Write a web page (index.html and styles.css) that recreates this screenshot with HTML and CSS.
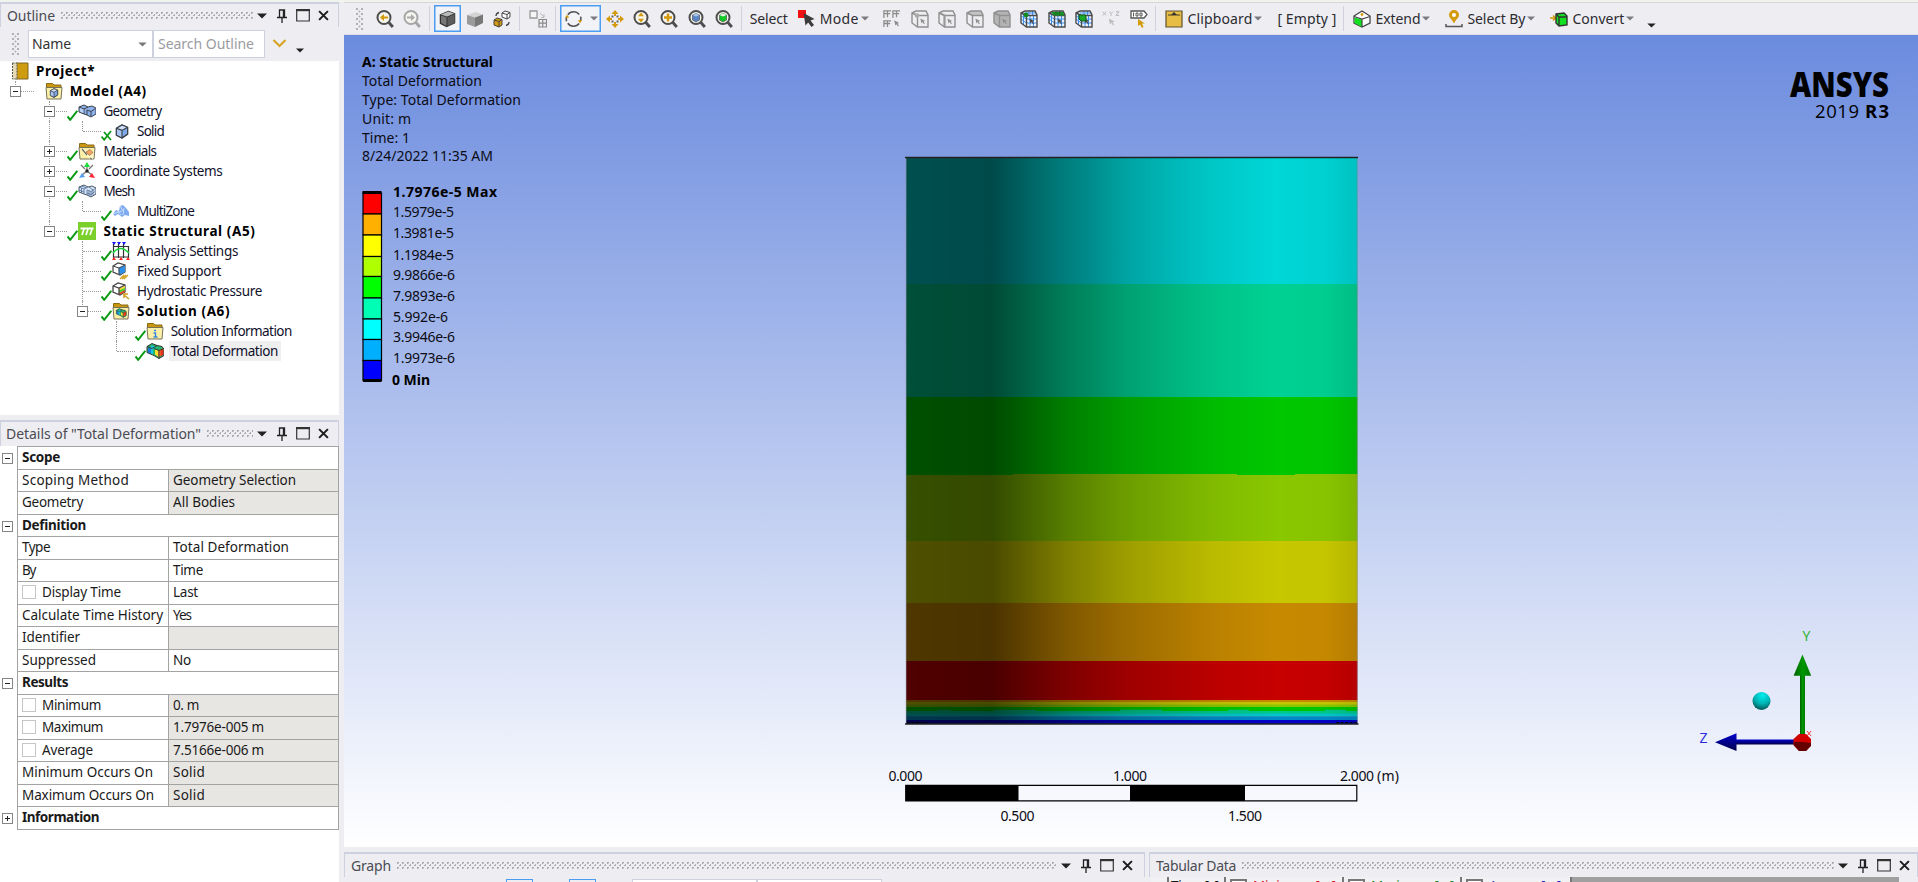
FILE: index.html
```html
<!DOCTYPE html>
<html lang="en">
<head>
<meta charset="utf-8">
<title>Mechanical - Static Structural</title>
<link rel="stylesheet" href="styles.css">
</head>
<body>
<svg class="sprite" aria-hidden="true">
  <defs>
    <symbol id="caret" viewBox="0 0 10 6"><path d="M0 .5h10L5 5.5z" fill="currentColor"/></symbol>
    <symbol id="pin" viewBox="0 0 10 14"><path d="M2.500 8V1h5v7M0 8.500h10M5 9v5" fill="none" stroke="#222" stroke-width="1.300"/><path d="M5.800 1h2v7h-2z" fill="#222"/></symbol>
    <symbol id="max" viewBox="0 0 14 13"><path d="M.7 1h12.600v11H.7z" fill="none" stroke="#333" stroke-width="1.200"/><path d="M0 0h14v2.200H0z" fill="#333"/></symbol>
    <symbol id="close" viewBox="0 0 12 12"><path d="M1.200 1.200l9.600 9.600M10.800 1.200l-9.600 9.600" stroke="#1c1c1c" stroke-width="2.200"/></symbol>
    <symbol id="check" viewBox="0 0 11 11"><path d="M.5 6.500l2.700 3.300L10.300.8" fill="none" stroke="#0a9a14" stroke-width="2"/></symbol>
    <symbol id="hidden" viewBox="0 0 11 11"><path d="M.5 6.500l2.700 3.300L10 1M3 2l7 8" fill="none" stroke="#0a9a14" stroke-width="1.800"/></symbol>
    <symbol id="folder" viewBox="0 0 18 18"><path d="M1.500 6V1.500h6l1.500 1.500h7V6z" fill="#c8960f" stroke="#8a6a14"/><path d="M1 5.500h16l-1 11.500H2z" fill="#fbf0a8" stroke="#77705a"/></symbol>
    <symbol id="cube" viewBox="0 0 14 16"><path d="M1 4.500L7 1l6 2.500v7.500l-6 4-6-3z" fill="#7fa8e8" stroke="#3c4148" stroke-width="1.200"/><path d="M1 4.500L7 1l6 2.500-6 3z" fill="#cfe0fa"/><path d="M1 4.500v7.500l6 3V7z" fill="#a9c6f3"/><path d="M1 4.500l6 2.300 6-3.300M7 7v8M1 4.500V12l6 3 6-4V3.500L7 1z" fill="none" stroke="#3c4148" stroke-width="1.200"/></symbol>
    <symbol id="book" viewBox="0 0 18 18"><path d="M5 1h12v16H5z" fill="#cf9c10" stroke="#7c6420"/><path d="M1.500 1H6v16H1.500z" fill="#e4d9b4" stroke="#555" stroke-dasharray="2 1"/></symbol>
    <symbol id="model" viewBox="0 0 18 18"><use href="#folder"/><use href="#cube" x="4.500" y="6" width="9" height="10"/></symbol>
    <symbol id="geometry" viewBox="0 0 18 18"><path d="M1 5l5-2 4 2 4-1 4 2v6l-5 3-4-2-3-1-5-2z" fill="#8cb2ee" stroke="#3c4148"/><path d="M1 5l5 2 4-2M6 7v5M9 8l4 1.500L17.500 6.500M13 9.500v5M9 8v5" fill="none" stroke="#3c4148"/><path d="M2 6l3.500 1.500v3.500L2 9.500z" fill="#b9d1f6"/></symbol>
    <symbol id="mesh" viewBox="0 0 18 18"><path d="M1 5l5-2 4 2 4-1 4 2v6l-5 3-4-2-3-1-5-2z" fill="#d7e5f7" stroke="#4b5664"/><path d="M1 5l5 2 4-2M6 7v5M9 8l4 1.500L17.500 6.500M13 9.500v5M9 8v5M3.500 6v5M11 9v5M15 8v5M1 8l5 2M9 11l4 1.500 4-3M3.500 4l5 2M11 5l4 3" fill="none" stroke="#4b6a94" stroke-width=".8"/></symbol>
    <symbol id="materials" viewBox="0 0 18 18"><use href="#folder"/><path d="M3 7l5 6 4 4h3l1-8z" fill="#fdf6c7"/><path d="M4 7l5 6M12 16l2 1" stroke="#6b6b6b" stroke-width="1.200"/><path d="M8 10l4-2.500 3 3-3.500 3z" fill="#f2a463" stroke="#9d6634" stroke-width=".7"/></symbol>
    <symbol id="axes" viewBox="0 0 18 18"><path d="M9 9V4M9 9l-5 4M9 9l5 4M3 3l4 4M15 3l-4 4" stroke="#777" stroke-width="1.300"/><path d="M9 0l3 5H6z" fill="#1ee03a"/><path d="M17 16l-6-1 3-4z" fill="#f23"/><path d="M1 16l6-1-3-4z" fill="#5aa0f0"/><path d="M7.500 7.500h3v3h-3z" fill="#222"/></symbol>
    <symbol id="zone" viewBox="0 0 18 18"><path d="M1 12l3-4 3 1 1-5 3-1 3 3 3 4v4l-4-1-3 2-4-3-3 2z" fill="#7eaaf0"/><path d="M8 4l3 5M5 8l4 5M12 6l-1 7M1 12l9-3" stroke="#c7dcfb"/></symbol>
    <symbol id="struct" viewBox="0 0 18 18"><path d="M0 0h18v18H0z" fill="#7bd02c"/><path d="M2.500 6.500h13" stroke="#fff" stroke-width="2"/><path d="M6 7l-2 6M10 7l-2 6M14 7l-2 6" stroke="#fff" stroke-width="1.700"/></symbol>
    <symbol id="settings" viewBox="0 0 18 18"><path d="M1.500 2v14M6.500 2v14M11.500 2v14M16.500 4v12M1 4.500h15M1 15h16" stroke="#333" stroke-width="1.200"/><path d="M1 11c5-6 10-6 16 0" fill="none" stroke="#18d83a" stroke-width="1.700"/><path d="M0 0h4L2 3zM5 0h4L7 3zM10 0h4l-2 3z" fill="#11f"/><path d="M0 18l2-3 2 3zM7 18l2-3 2 3zM14 18l2-3 2 3z" fill="#f22"/></symbol>
    <symbol id="support" viewBox="0 0 18 18"><path d="M1 4l5-3 7 2v7l-5 3-7-3z" fill="#fff" stroke="#444" stroke-width="1.200"/><path d="M6.500 5.500L13 3.500V10l-6 3z" fill="#2c8fe8"/><path d="M1 4l6 2 6-3M7 6v7" fill="none" stroke="#444"/><path d="M8 17l4-4M12 17l4-4M10 17l4-4" stroke="#d2a52b" stroke-width="1.400"/></symbol>
    <symbol id="pressure" viewBox="0 0 18 18"><path d="M1 4l5-3 7 2v7l-5 3-7-3z" fill="#fff" stroke="#444" stroke-width="1.300"/><path d="M7 6.500L13 4v2.500L7 9z" fill="#ffd52e"/><path d="M7 8.500L13 6v2.500L7 11z" fill="#42d53a"/><path d="M7 11l6-3v2l-6 3z" fill="#e8442a"/><path d="M1 4l6 2 6-3M7 6v7" fill="none" stroke="#444" stroke-width="1.300"/><path d="M17 17l-5-4M12 16v-4h4" fill="none" stroke="#cf9c1b" stroke-width="1.500"/></symbol>
    <symbol id="deform" viewBox="0 0 18 17"><path d="M1 4l5-3 5 2 5 1 2 3v6l-5 3-5-3-7-3z" fill="#24b56a" stroke="#333"/><path d="M2 5l3 1v5l-3-1z" fill="#1878e0"/><path d="M5 3l5 1-3 3v5l-2-1V6z" fill="#19c8dc"/><path d="M9 7l3 1v6l-3-2z" fill="#ffe02b"/><path d="M12 8l5-2v6l-5 3z" fill="#f08020"/><path d="M14.500 7.500l3-1V12l-3 2z" fill="#e23020"/><path d="M8 6l5 2 5-2M13 8v8M1 4l5 2 5-3" fill="none" stroke="#333" stroke-width=".9"/></symbol>
    <symbol id="solution" viewBox="0 0 18 18"><use href="#folder"/><use href="#deform" x="3" y="6" width="12" height="10"/></symbol>
    <symbol id="info" viewBox="0 0 18 18"><use href="#folder"/><path d="M8 8.500h2M7.500 11h2v4M7.500 15h4" fill="none" stroke="#3488e0" stroke-width="1.400"/></symbol>

    <symbol id="lens" viewBox="0 0 18 18"><circle cx="8" cy="7.500" r="6.500" fill="#f6f4ee" stroke="currentColor" stroke-width="2"/><path d="M12.500 12l4.300 5" stroke="currentColor" stroke-width="2.800"/></symbol>
    <symbol id="z-back" viewBox="0 0 18 18"><use href="#lens"/><path d="M4 7.500l4-3.500v2.500h4v2H8V11z" fill="#d29a0c"/></symbol>
    <symbol id="z-fwd" viewBox="0 0 18 18"><use href="#lens"/><path d="M12 7.500L8 4v2.500H4v2h4V11z" fill="#aaa"/></symbol>
    <symbol id="z-drag" viewBox="0 0 18 18"><use href="#lens"/><path d="M8 2.500l3 3.700H5zM8 12.500l3-3.700H5z" fill="#d29a0c"/></symbol>
    <symbol id="z-in" viewBox="0 0 18 18"><use href="#lens"/><path d="M4 7.500h8M8 3.500v8" stroke="#d29a0c" stroke-width="2.400"/></symbol>
    <symbol id="z-fit" viewBox="0 0 18 18"><use href="#lens"/><path d="M4.500 5L8 3.500 11.500 5v5L8 12l-3.500-2z" fill="#5787c4" stroke="#555" stroke-width=".7"/><path d="M4.500 5L8 6.500 11.500 5 8 3.500z" fill="#aac6ec"/></symbol>
    <symbol id="z-sel" viewBox="0 0 18 18"><use href="#lens"/><path d="M4.500 5L8 3.500 11.500 5v5L8 12l-3.500-2z" fill="#12c826" stroke="#555" stroke-width=".7"/><path d="M4.500 5L8 6.500 11.500 5 8 3.500z" fill="#e6f5e6"/></symbol>
    <symbol id="t-edges" viewBox="0 0 18 18"><path d="M1.500 4.500L10 1l6.500 2.500V13L8 17l-6.500-3.500z" fill="#777" stroke="#333" stroke-width="1.400"/><path d="M1.500 4.500L10 1l6.500 2.500L8.500 7z" fill="#b9b9b9"/><path d="M8.500 7L16.500 3.500V13L8 17z" fill="#5d5d5d"/><path d="M1.500 4.500L8.500 7l8-3.500M8.500 7v10" fill="none" stroke="#333"/></symbol>
    <symbol id="t-solid" viewBox="0 0 18 18"><path d="M1 5l9-3 7 2.500-8 3z" fill="#d3d3d3"/><path d="M1 5l8 2.500V17l-8-3z" fill="#9a9a9a"/><path d="M9 7.500l8-3V13l-8 4z" fill="#777"/></symbol>
    <symbol id="t-swap" viewBox="0 0 18 18"><path d="M1 10l3-2 5 1.500V15l-3 2-5-2z" fill="#d29a0c" stroke="#444"/><path d="M1 10l5 1.500 3-2M6 11.500V17" fill="none" stroke="#444"/><path d="M9 3l3-2 5 1.500V7l-3 2-5-2z" fill="#fff" stroke="#444"/><path d="M9 3l5 1.500 3-2M14 4.500V9" fill="none" stroke="#444"/><path d="M3 6c0-2 1-3 3-3.500M16 12c0 2-1 3-3 3.500" fill="none" stroke="#444" stroke-width="1.300"/></symbol>
    <symbol id="t-views" viewBox="0 0 18 18"><path d="M1 1h7v7H1z" fill="#f5f5f5" stroke="#999" stroke-width="1.300"/><path d="M10 9.500h7.500v7.500H10zM13.700 9.500V17M10 13.200h7.500" fill="none" stroke="#8a8a8a" stroke-width="1.200"/><path d="M11 3l4 4M15 4v3.500h-3" fill="none" stroke="#bbb"/></symbol>
    <symbol id="t-rotate" viewBox="0 0 18 18"><path d="M3 4.500a7.500 7.500 0 0 1 12-.2M16.500 6.500a7.500 7.500 0 0 1-.3 5M15 13.700a7.500 7.500 0 0 1-12-.2M1.700 11.500A7.500 7.500 0 0 1 1.700 7" fill="none" stroke="#555" stroke-width="1.700"/><path d="M0 8l2-3.500 2.500 3zM18 10l-2 3.500-2.500-3z" fill="#d29a0c"/></symbol>
    <symbol id="t-pan" viewBox="0 0 18 18"><path d="M9 0l3.500 4H10v2H8V4H5.500zM9 18l3.500-4H10v-2H8v2H5.500zM0 9l4-3.500V8h2v2H4v2.500zM18 9l-4-3.500V8h-2v2h2v2.500z" fill="#d29a0c"/><path d="M5.500 5.500h2v2h-2zM10.500 5.500h2v2h-2zM5.500 10.500h2v2h-2zM10.500 10.500h2v2h-2z" fill="#666"/></symbol>
    <symbol id="t-mode" viewBox="0 0 18 18"><path d="M0 0h8v8H0z" fill="#f01010"/><path d="M5.500 3l11 6-4 1.500 3.500 4.500-2.500 2-3.300-4.500-2.700 3z" fill="#3b3b3b"/></symbol>
    <symbol id="arrow" viewBox="0 0 8 9"><path d="M.5.5L7 3.800 4.700 4.500 6.500 7.500 5.300 8.300 3.400 5.300 1.900 7z" fill="currentColor"/></symbol>
    <symbol id="s-multi" viewBox="0 0 20 20"><path d="M1 9V1h8M1 4h7M5 1v7M11 9V1h8M11 4h7M15 1v7M1 19v-7h8M1 15h7M5 12v7" fill="none" stroke="#8b8b8b" stroke-width="1.400"/><use href="#arrow" x="12" y="11" width="7" height="8" color="#8b8b8b"/></symbol>
    <symbol id="s-box" viewBox="0 0 18 18"><path d="M1 3l4-2h10l2 4v12H6.500L1 13z" fill="none" stroke="currentColor" stroke-width="1.400"/><path d="M1 3l5.500 2.500H17M6.500 5.500V17" fill="none" stroke="currentColor" stroke-width="1.400"/><use href="#arrow" x="9" y="8" width="6" height="7"/></symbol>
    <symbol id="s-vertex" viewBox="0 0 18 18"><use href="#s-box"/><circle cx="6" cy="5.500" r="2.300" fill="#aaa"/></symbol>
    <symbol id="s-edge" viewBox="0 0 18 18"><use href="#s-box"/><path d="M2 3l4.500 2.500V16" fill="none" stroke="#999" stroke-width="2"/></symbol>
    <symbol id="s-face" viewBox="0 0 18 18"><path d="M1 3l4-2h10l2 4.500H6.500z" fill="#c4c4c4"/><use href="#s-box"/></symbol>
    <symbol id="s-body" viewBox="0 0 18 18"><path d="M1 3l4-2h10l2 4v12H6.500L1 13z" fill="#b4b4b4"/><use href="#s-box"/></symbol>
    <symbol id="s-mesh" viewBox="0 0 18 18"><path d="M1 3l4-2h10l2 4v12H6.500L1 13z" fill="#eaf2ff"/><path d="M10 5v12M13.500 5v12M7 9h10M7 13h10M3.500 4v10M1 6l5.500 3M1 9l5.500 4M5 3h11M9 1v4M12.500 1v4" stroke="#3d8fee"/><use href="#s-box" color="#4a4a4a"/></symbol>
    <symbol id="s-node" viewBox="0 0 18 18"><use href="#s-mesh"/><circle cx="6" cy="5" r="2.400" fill="#128a20"/></symbol>
    <symbol id="s-mface" viewBox="0 0 18 18"><use href="#s-mesh"/><path d="M3 2h12l1.500 3.500H6z" fill="#12931f"/><path d="M8 1v4M11.500 1v4" stroke="#2c5c2c"/></symbol>
    <symbol id="s-elem" viewBox="0 0 18 18"><use href="#s-mesh"/><path d="M4 5h7v6H6L4 9z" fill="#19a828" stroke="#145c1c"/></symbol>
    <symbol id="s-xyz" viewBox="0 0 20 18"><path d="M1 1l3.500 4M4.500 1L1 5M8 1l2 2 2-2M10 3v2.500M15.500 1H19l-3.500 4H19" fill="none" stroke="#b5b5b5" stroke-width="1.100"/><use href="#arrow" x="7" y="8" width="8" height="9" color="#bdbdbd"/></symbol>
    <symbol id="s-tag" viewBox="0 0 18 18"><path d="M1 1h13l3 3.500L14 8H1z" fill="#fff" stroke="#555" stroke-width="1.300"/><path d="M3.500 2.500v4M6 3h2v3H6zM10 3h2v3h-2z" fill="none" stroke="#555"/><path d="M8 9v7l2-1.500L12 18l1.500-1L12 13.500h3z" fill="#d29a0c"/></symbol>
    <symbol id="clip" viewBox="0 0 18 18"><path d="M1 1h16v16H1z" fill="#e7bd45" stroke="#5e5230" stroke-width="1.200"/><path d="M3 5h12" stroke="#5e5230" stroke-width="1.200"/><path d="M9 2l3 3H6z" fill="#333"/></symbol>
    <symbol id="extend" viewBox="0 0 18 18"><path d="M1 6l8-5 8 5v7l-8 4-8-4z" fill="#fff" stroke="#444" stroke-width="1.300"/><path d="M1.500 7.500L9 9.500V17l-7.500-4z" fill="#12e020"/><path d="M1 6.500L9 9l8-2.500M9 9v8" fill="none" stroke="#444" stroke-width="1.200"/><path d="M9 2.500l1.700 2L9 6.500l-1.700-2z" fill="#d29a0c"/></symbol>
    <symbol id="pinpoint" viewBox="0 0 18 18"><path d="M9 0a5 5 0 0 1 5 5c0 3-3 4-5 8.500C7 9 4 8 4 5a5 5 0 0 1 5-5z" fill="#d29a0c"/><circle cx="9" cy="5" r="2" fill="#fff"/><path d="M1 14v2.500h16V14" fill="none" stroke="#555" stroke-width="1.500"/></symbol>
    <symbol id="convert" viewBox="0 0 18 18"><path d="M0 8h5M3 5.500L5.500 8 3 10.500" fill="none" stroke="#d29a0c" stroke-width="1.700"/><path d="M6 4l8-1 3 3v9l-8 1-3-3z" fill="#12e020" stroke="#333" stroke-width="1.400"/><path d="M6 4l3 3h8M9 7v9" fill="none" stroke="#333" stroke-width="1.400"/></symbol>
  </defs>
</svg>

<div class="app">
  <aside class="side">
    <section class="outline">
      <header class="bar">
        <span class="bar-title" data-w="48">Outline</span><i class="grip"></i>
        <svg class="b-caret"><use href="#caret"/></svg><svg class="b-pin"><use href="#pin"/></svg><svg class="b-max"><use href="#max"/></svg><svg class="b-close"><use href="#close"/></svg>
      </header>
      <div class="filter">
        <i class="handle"></i>
        <div class="combo"><span data-w="39">Name</span><svg class="combo-caret"><use href="#caret"/></svg></div>
        <div class="search"><span data-w="96">Search Outline</span></div>
        <svg class="chevron" viewBox="0 0 14 9"><path d="M1 1l6 6 6-6" fill="none" stroke="#d8a528" stroke-width="2.200"/></svg>
        <svg class="more"><use href="#caret"/></svg>
      </div>
      <div class="tree">
        <div class="node root"><svg class="ico"><use href="#book"/></svg><b data-w="59">Project*</b></div>
        <div class="node"><i class="g top"><u class="minus"></u></i><svg class="ico in"><use href="#model"/></svg><b data-w="77">Model (A4)</b></div>
        <div class="node"><i class="g none"></i><i class="g v"><u class="minus"></u></i><svg class="chk"><use href="#check"/></svg><svg class="ico"><use href="#geometry"/></svg><span data-w="58">Geometry</span></div>
        <div class="node"><i class="g none"></i><i class="g v pass"></i><i class="g end"></i><svg class="chk"><use href="#hidden"/></svg><svg class="ico small"><use href="#cube"/></svg><span data-w="27">Solid</span></div>
        <div class="node"><i class="g none"></i><i class="g v"><u class="plus"></u></i><svg class="chk"><use href="#check"/></svg><svg class="ico"><use href="#materials"/></svg><span data-w="53">Materials</span></div>
        <div class="node"><i class="g none"></i><i class="g v"><u class="plus"></u></i><svg class="chk"><use href="#check"/></svg><svg class="ico"><use href="#axes"/></svg><span data-w="119">Coordinate Systems</span></div>
        <div class="node"><i class="g none"></i><i class="g v"><u class="minus"></u></i><svg class="chk"><use href="#check"/></svg><svg class="ico"><use href="#mesh"/></svg><span data-w="31">Mesh</span></div>
        <div class="node"><i class="g none"></i><i class="g v pass"></i><i class="g end"></i><svg class="chk"><use href="#check"/></svg><svg class="ico"><use href="#zone"/></svg><span data-w="57">MultiZone</span></div>
        <div class="node"><i class="g none"></i><i class="g end"><u class="minus"></u></i><svg class="chk"><use href="#check"/></svg><svg class="ico"><use href="#struct"/></svg><b data-w="152">Static Structural (A5)</b></div>
        <div class="node"><i class="g none"></i><i class="g none"></i><i class="g v"></i><svg class="chk"><use href="#check"/></svg><svg class="ico"><use href="#settings"/></svg><span data-w="101">Analysis Settings</span></div>
        <div class="node"><i class="g none"></i><i class="g none"></i><i class="g v"></i><svg class="chk"><use href="#check"/></svg><svg class="ico"><use href="#support"/></svg><span data-w="84">Fixed Support</span></div>
        <div class="node"><i class="g none"></i><i class="g none"></i><i class="g v"></i><svg class="chk"><use href="#check"/></svg><svg class="ico"><use href="#pressure"/></svg><span data-w="125">Hydrostatic Pressure</span></div>
        <div class="node"><i class="g none"></i><i class="g none"></i><i class="g end"><u class="minus"></u></i><svg class="chk"><use href="#check"/></svg><svg class="ico"><use href="#solution"/></svg><b data-w="93">Solution (A6)</b></div>
        <div class="node"><i class="g none"></i><i class="g none"></i><i class="g none"></i><i class="g v"></i><svg class="chk"><use href="#check"/></svg><svg class="ico"><use href="#info"/></svg><span data-w="121">Solution Information</span></div>
        <div class="node"><i class="g none"></i><i class="g none"></i><i class="g none"></i><i class="g end"></i><svg class="chk"><use href="#check"/></svg><svg class="ico"><use href="#deform"/></svg><span class="picked"><span data-w="107">Total Deformation</span></span></div>
      </div>
    </section>

    <section class="details">
      <header class="bar">
        <span class="bar-title" data-w="195">Details of "Total Deformation"</span><i class="grip"></i>
        <svg class="b-caret"><use href="#caret"/></svg><svg class="b-pin"><use href="#pin"/></svg><svg class="b-max"><use href="#max"/></svg><svg class="b-close"><use href="#close"/></svg>
      </header>
      <div class="props">
        <div class="prop group"><u class="minus"></u><div><b data-w="38">Scope</b></div></div>
        <div class="prop"><div><span data-w="107">Scoping Method</span></div><div class="ro"><span data-w="123">Geometry Selection</span></div></div>
        <div class="prop"><div><span data-w="61">Geometry</span></div><div class="ro"><span data-w="62">All Bodies</span></div></div>
        <div class="prop group"><u class="minus"></u><div><b data-w="64">Definition</b></div></div>
        <div class="prop"><div><span data-w="28">Type</span></div><div><span data-w="116">Total Deformation</span></div></div>
        <div class="prop"><div><span data-w="13">By</span></div><div><span data-w="30">Time</span></div></div>
        <div class="prop"><div><i class="box"></i><span data-w="79">Display Time</span></div><div><span data-w="25">Last</span></div></div>
        <div class="prop"><div><span data-w="141">Calculate Time History</span></div><div><span data-w="18">Yes</span></div></div>
        <div class="prop"><div><span data-w="58">Identifier</span></div><div class="ro"></div></div>
        <div class="prop"><div><span data-w="74">Suppressed</span></div><div><span data-w="18">No</span></div></div>
        <div class="prop group"><u class="minus"></u><div><b data-w="46">Results</b></div></div>
        <div class="prop"><div><i class="box"></i><span data-w="59">Minimum</span></div><div class="ro"><span data-w="26">0. m</span></div></div>
        <div class="prop"><div><i class="box"></i><span data-w="61">Maximum</span></div><div class="ro"><span data-w="91">1.7976e-005 m</span></div></div>
        <div class="prop"><div><i class="box"></i><span data-w="51">Average</span></div><div class="ro"><span data-w="91">7.5166e-006 m</span></div></div>
        <div class="prop"><div><span data-w="131">Minimum Occurs On</span></div><div class="ro"><span data-w="32">Solid</span></div></div>
        <div class="prop"><div><span data-w="132">Maximum Occurs On</span></div><div class="ro"><span data-w="32">Solid</span></div></div>
        <div class="prop group"><u class="plus"></u><div><b data-w="77">Information</b></div></div>
      </div>
    </section>
  </aside>

  <main class="main">
    <nav class="tools">
      <i class="handle"></i>
      <svg class="tool dark first"><use href="#z-back"/></svg><svg class="tool faded"><use href="#z-fwd"/></svg>
      <i class="sep"></i>
      <span class="tool on"><svg><use href="#t-edges"/></svg></span><svg class="tool"><use href="#t-solid"/></svg><svg class="tool"><use href="#t-swap"/></svg>
      <i class="sep"></i>
      <svg class="tool wide"><use href="#t-views"/></svg>
      <i class="sep"></i>
      <span class="split on"><svg><use href="#t-rotate"/></svg><svg class="dd"><use href="#caret"/></svg></span>
      <svg class="tool"><use href="#t-pan"/></svg><svg class="tool dark"><use href="#z-drag"/></svg><svg class="tool dark"><use href="#z-in"/></svg><svg class="tool dark"><use href="#z-fit"/></svg><svg class="tool dark"><use href="#z-sel"/></svg>
      <i class="sep"></i>
      <span class="label select" data-w="38">Select</span>
      <span class="menu mode"><svg><use href="#t-mode"/></svg><span data-w="39">Mode</span><svg class="dd"><use href="#caret"/></svg></span>
      <svg class="tool"><use href="#s-multi"/></svg><svg class="tool gray"><use href="#s-vertex"/></svg><svg class="tool gray"><use href="#s-edge"/></svg><svg class="tool gray"><use href="#s-face"/></svg><svg class="tool gray"><use href="#s-body"/></svg><svg class="tool dark"><use href="#s-node"/></svg><svg class="tool dark"><use href="#s-mface"/></svg><svg class="tool dark"><use href="#s-elem"/></svg><svg class="tool"><use href="#s-xyz"/></svg><svg class="tool"><use href="#s-tag"/></svg>
      <i class="sep"></i>
      <span class="menu clipboard"><svg><use href="#clip"/></svg><span data-w="65">Clipboard</span><svg class="dd"><use href="#caret"/></svg></span>
      <span class="label empty" data-w="59">[ Empty ]</span>
      <i class="sep"></i>
      <span class="menu extend"><svg><use href="#extend"/></svg><span data-w="45">Extend</span><svg class="dd"><use href="#caret"/></svg></span>
      <span class="menu by"><svg><use href="#pinpoint"/></svg><span data-w="58">Select By</span><svg class="dd"><use href="#caret"/></svg></span>
      <span class="menu by"><svg><use href="#convert"/></svg><span data-w="52">Convert</span><svg class="dd"><use href="#caret"/></svg></span>
      <svg class="overflow"><use href="#caret"/></svg>
    </nav>

    <svg class="view" viewBox="344 35 1574 812">
      <defs>
        <linearGradient id="shade">
          <stop offset="0" stop-opacity=".69"/><stop offset=".19" stop-opacity=".71"/><stop offset=".27" stop-opacity=".61"/><stop offset=".36" stop-opacity=".5"/><stop offset=".48" stop-opacity=".39"/><stop offset=".68" stop-opacity=".27"/><stop offset=".82" stop-opacity=".22"/><stop offset=".93" stop-opacity=".23"/><stop offset="1" stop-opacity=".29"/>
        </linearGradient>
        <linearGradient id="shine"><stop offset=".4" stop-color="#0ff" stop-opacity="0"/><stop offset=".82" stop-color="#0ff" stop-opacity=".28"/><stop offset="1" stop-color="#0ff" stop-opacity=".16"/></linearGradient>
        <linearGradient id="shine2"><stop offset=".4" stop-color="#00ffb4" stop-opacity="0"/><stop offset=".82" stop-color="#00ffb4" stop-opacity=".18"/><stop offset="1" stop-color="#00ffb4" stop-opacity=".1"/></linearGradient>
        <radialGradient id="ball" cx=".55" cy=".2" r=".9"><stop offset="0" stop-color="#0ee"/><stop offset=".5" stop-color="#00b4b4"/><stop offset="1" stop-color="#003c3c"/></radialGradient>
        <linearGradient id="bl" x2="0" y2="1"><stop offset="0" stop-color="#0000d0"/><stop offset="1" stop-color="#000048"/></linearGradient>
        <linearGradient id="gr"><stop offset="0" stop-color="#006000"/><stop offset=".5" stop-color="#009600"/><stop offset="1" stop-color="#007800"/></linearGradient>
      </defs>

      <g class="info">
        <text class="bold" x="362" y="67" textLength="131">A: Static Structural</text>
        <text x="362" y="86" textLength="120">Total Deformation</text>
        <text x="362" y="105" textLength="159">Type: Total Deformation</text>
        <text x="362" y="123.500" textLength="49">Unit: m</text>
        <text x="362" y="142.500" textLength="48">Time: 1</text>
        <text x="362" y="161" textLength="131">8/24/2022 11:35 AM</text>
        <text class="bold" x="393" y="197" textLength="104">1.7976e-5 Max</text>
        <text x="393" y="217" textLength="61">1.5979e-5</text>
        <text x="393" y="238" textLength="61">1.3981e-5</text>
        <text x="393" y="259.500" textLength="61">1.1984e-5</text>
        <text x="393" y="279.500" textLength="62">9.9866e-6</text>
        <text x="393" y="301" textLength="62">7.9893e-6</text>
        <text x="393" y="322" textLength="55">5.992e-6</text>
        <text x="393" y="342" textLength="62">3.9946e-6</text>
        <text x="393" y="363" textLength="62">1.9973e-6</text>
        <text class="bold" x="392" y="384.500" textLength="38">0 Min</text>
      </g>

      <g stroke="#000" stroke-width="1.200">
        <rect x="363" y="193" width="18.500" height="21" fill="#f00"/>
        <rect x="363" y="214" width="18.500" height="21" fill="#ffb000"/>
        <rect x="363" y="235" width="18.500" height="21.500" fill="#ff0"/>
        <rect x="363" y="256.500" width="18.500" height="20" fill="#b0ff00"/>
        <rect x="363" y="276.500" width="18.500" height="21.500" fill="#0f0"/>
        <rect x="363" y="298" width="18.500" height="21" fill="#00ffb4"/>
        <rect x="363" y="319" width="18.500" height="20.500" fill="#0ff"/>
        <rect x="363" y="339.500" width="18.500" height="21" fill="#00b0ff"/>
        <rect x="363" y="360.500" width="18.500" height="20" fill="#00f"/>
        <path d="M362.500 192.500h19M363 380.500h18.500" stroke-width="2.800"/>
      </g>

      <g>
        <path d="M906 157h451.500v127H906z" fill="#0ff"/>
        <path d="M906 284h451.500v113H906z" fill="#00ffb4"/>
        <path d="M906 397h451.500v78H906z" fill="#0f0"/>
        <path d="M906 475h107v-1h224v1h58v-1h62.500v67H906z" fill="#b0ff00"/>
        <path d="M906 541h451.500v62H906z" fill="#ff0"/>
        <path d="M906 603h451.500v58H906z" fill="#ffb000"/>
        <path d="M906 661h451.500v39H906z" fill="#f00"/>
        <path d="M906 700h451.500v2.300H906z" fill="#ffb000"/>
        <path d="M906 702h451.500v3H906z" fill="#ff0"/>
        <path d="M906 704.500h451.500v3H906z" fill="#b0ff00"/>
        <path d="M906 707h451.500v4.300H906z" fill="#0f0"/>
        <path d="M906 711h451.500v3H906zM937 709.700h14v1.500h-14zM994 709.700h42v1.500h-42zM1120 709.700h42v1.500h-42zM1228 709.700h21v1.500h-21zM1325 709.700h21v1.500h-21z" fill="#00ffb4"/>
        <path d="M906 713.500h451.500v3H906z" fill="#0ff"/>
        <path d="M906 716.300h451.500v4H906z" fill="#00b0ff"/>
        <path d="M906 720h451.500v4H906z" fill="#00f"/>
        <path d="M906 157h451.500v567H906z" fill="url(#shade)"/>
        <path d="M906 157h451.500v127H906z" fill="url(#shine)"/>
        <path d="M906 284h451.500v113H906z" fill="url(#shine2)"/>
        <path d="M906.200 158v566M1357.300 158v566" stroke="#889" stroke-opacity=".6"/>
        <path d="M905 157.500h453M905 724h453.500" stroke="#222" stroke-width="1.300"/>
        <path d="M907 722.700h20M1336 722.700h21" stroke="#000" stroke-dasharray="3 1.500"/>
      </g>

      <g>
        <path d="M905.800 785.300h451v15.500h-451z" fill="#f7f8fe" stroke="#000" stroke-width="1.200"/>
        <path d="M905.500 785h113v16h-113zM1130 785h115v16h-115z"/>
        <g class="info" text-anchor="middle">
          <text x="905.500" y="781" textLength="34">0.000</text><text x="1130" y="781" textLength="34">1.000</text><text x="1357" y="781" textLength="34">2.000</text><text x="1388" y="781" textLength="22">(m)</text>
          <text x="1017.500" y="821" textLength="34">0.500</text><text x="1245" y="821" textLength="34">1.500</text>
        </g>
      </g>

      <g class="brand">
        <text class="ansys" x="1790" y="96.500" textLength="99" lengthAdjust="spacingAndGlyphs">ANSYS</text>
        <text class="release" x="1815" y="118" textLength="44">2019</text>
        <text class="release strong" x="1865" y="118" textLength="24">R3</text>
      </g>

      <g>
        <path d="M1800 674h5v61h-5z" fill="url(#gr)"/><path d="M1802.500 654.500l8.700 21.300h-17.600z" fill="url(#gr)"/>
        <path d="M1736 739.500h60v5h-60z" fill="url(#bl)"/><path d="M1715 742.200l21.500-9v17.800z" fill="url(#bl)"/>
        <path d="M1807 736l4-5M1807 731l4 5" stroke="#f33" stroke-width="1"/>
        <path d="M1799 734h7l5 5v6l-5 6h-7l-5.500-6v-6z" fill="#d00000"/><path d="M1802 742l9 1v3l-5 5h-7l-5.500-6 1-3z" fill="#650000"/>
        <circle cx="1761.500" cy="701" r="9" fill="url(#ball)"/>
        <g class="axis"><text x="1802.500" y="641" fill="#22b022">Y</text><text x="1699.500" y="743" fill="#2a2ae0">Z</text></g>
      </g>
    </svg>

    <div class="dock">
      <section class="graph">
        <header class="bar">
          <span class="bar-title" data-w="40">Graph</span><i class="grip"></i>
          <svg class="b-caret"><use href="#caret"/></svg><svg class="b-pin"><use href="#pin"/></svg><svg class="b-max"><use href="#max"/></svg><svg class="b-close"><use href="#close"/></svg>
        </header>
        <div class="graph-tools"><i class="gbtn"></i><i class="gbtn"></i><i class="gcombo"></i><i class="gcombo"></i></div>
      </section>
      <section class="tabular">
        <header class="bar">
          <span class="bar-title" data-w="80">Tabular Data</span><i class="grip"></i>
          <svg class="b-caret"><use href="#caret"/></svg><svg class="b-pin"><use href="#pin"/></svg><svg class="b-max"><use href="#max"/></svg><svg class="b-close"><use href="#close"/></svg>
        </header>
        <div class="sheet">
          <div class="th corner"></div>
          <div class="th time"><span data-w="48">Time [s]</span></div>
          <div class="th"><i class="tick"></i><span class="red" data-w="83">Minimum [m]</span></div>
          <div class="th"><i class="tick"></i><span class="green" data-w="83">Maximum [m]</span></div>
          <div class="th avg"><i class="tick"></i><span class="blue" data-w="72">Average [m]</span></div>
          <div class="void"></div>
        </div>
      </section>
    </div>
  </main>
</div>
<script src="fit.js"></script>
</body>
</html>
```
FILE: styles.css
```css
* { box-sizing: border-box; }
body {
  margin: 0;
  width: 1918px;
  height: 882px;
  overflow: hidden;
  background: #eeeef2;
  font: 14px/18px "Noto Sans", "Open Sans", sans-serif;
  color: #1a1a1a;
}
.sprite { position: absolute; width: 0; height: 0; }
.app { display: flex; height: 882px; border-top: 2px solid #f1f3ee; overflow: hidden; }
[data-w] { display: inline-block; white-space: nowrap; }

/* panel title bars */
.bar {
  display: flex;
  align-items: center;
  height: 25px;
  padding: 0 9px 0 6px;
  border: 1px solid #cdd0de;
  border-width: 2px 1px 0;
  color: #4b4b52;
}
.bar svg { flex: none; }
.grip {
  flex: 1;
  height: 7px;
  margin: 0 4px 0 6px;
  background-image: radial-gradient(circle at .8px .8px, #a9a9b0 .8px, transparent 1.100px), radial-gradient(circle at 3.300px 3.300px, #a9a9b0 .8px, transparent 1.100px);
  background-size: 5px 5px;
}
.b-caret { width: 10px; height: 6px; margin-right: 10px; color: #222; }
.b-pin { width: 10px; height: 14px; margin-right: 9px; }
.b-max { width: 14px; height: 13px; margin-right: 8px; }
.b-close { width: 11px; height: 11px; }
.handle {
  flex: none;
  width: 7px;
  height: 22px;
  background-image: radial-gradient(circle at 1px 1px, #b0b0b6 .8px, transparent 1.200px), radial-gradient(circle at 3.500px 3.500px, #b0b0b6 .8px, transparent 1.200px);
  background-size: 5px 5px;
}

/* left side */
.side { width: 339px; flex: none; display: flex; flex-direction: column; background: #eeeef2; }
.outline { height: 413px; display: flex; flex-direction: column; }
.outline .bar { margin-top: 0; }
.filter { display: flex; align-items: center; height: 34px; padding-left: 12px; }
.filter .handle { margin-right: 9px; }
.combo, .search { display: flex; align-items: center; height: 28px; background: #fff; border: 1px solid #cdd0de; }
.combo { width: 125px; padding: 0 5px 0 3px; justify-content: space-between; color: #333; }
.combo-caret { width: 9px; height: 5px; color: #777; }
.search { width: 112px; padding-left: 4px; color: #9b9b9f; }
.chevron { width: 15px; height: 9px; margin: -2px 9px 0 7px; }
.more { width: 8px; height: 5px; margin-top: 12px; color: #222; }
.tree { flex: 1; background: #fff; font-size: 13.500px; line-height: 20px; color: #10102a; }
.tree b { color: #000; }
.node { display: flex; align-items: center; height: 20px; }
.node.root { padding-left: 11px; }
.ico { flex: none; width: 18px; height: 18px; margin-right: 7px; }
.ico.in { margin-left: 11px; }
.ico.small { width: 14px; height: 15px; margin: 0 8px 0 3px; }
.chk { flex: none; width: 11px; height: 11px; margin-top: 8px; }
.picked { margin-left: -2px; padding: 0 3px 0 2px; background: #efeff0; height: 20px; }

/* connector cells: vertical stem plus a stub to the icon */
.g { position: relative; flex: none; width: 33.700px; height: 20px; }
.g::before { content: ""; position: absolute; left: 15px; top: 0; height: 20px; border-left: 1px dotted #999; }
.g::after { content: ""; position: absolute; left: 16px; right: 0; top: 10px; border-top: 1px dotted #999; }
.g.end::before, .g.top::before { height: 10px; }
.g.none::before, .g.none::after, .g.pass::after { display: none; }
u.minus, u.plus { position: absolute; left: 10px; top: 5px; z-index: 1; width: 11px; height: 11px; border: 1px solid #858585; background: #fff; }
u.minus::before, u.plus::before { content: ""; position: absolute; left: 2px; top: 4px; width: 5px; height: 1px; background: #222; }
u.plus::after { content: ""; position: absolute; left: 4px; top: 2px; width: 1px; height: 5px; background: #222; }

/* property grid */
.details { flex: 1; margin-top: 5px; background: #fff; }
.details .bar { background: #eeeef2; padding-left: 5px; height: 26px; padding-bottom: 1px; }
.props { margin: 0 0 0 17px; border: 1px solid #a3a3a3; border-width: 1px 1px 0 1px; width: 322px; }
.prop { position: relative; display: grid; grid-template-columns: 150px 1fr; height: 22.500px; border-bottom: 1px solid #a3a3a3; font-size: 13.500px; }
.prop > div { display: flex; align-items: center; padding-left: 4px; padding-bottom: 1px; }
.prop > div + div { border-left: 1px solid #a3a3a3; }
.prop.group { grid-template-columns: 1fr; }
.prop .ro { background: #e8e6e2; }
.prop > u.minus, .prop > u.plus { left: -16px; top: 6px; }
.box { width: 14px; height: 14px; margin-right: 6px; border: 1px solid #c6c6c6; background: #fff; }

/* top toolbar */
.main { flex: 1; display: flex; flex-direction: column; margin-left: 5px; min-width: 0; }
.main > .tools, .main > .view { flex: none; }
.tools { display: flex; align-items: center; height: 33px; padding: 0 0 0 12px; border-top: 1px solid #d6d6d6; border-bottom: 1px solid #dcdce6; white-space: nowrap; color: #2b2b30; }
.tools > * { flex: none; }
.tool { width: 18px; height: 18px; margin: 0 4.700px; }
.tool.first { margin-left: 13px; }
.dark { color: #4d4d4d; }
.gray { color: #8f8f8f; }
.faded { color: #a5a5a5; }
.sep { width: 1px; height: 25px; margin: 0 4px 0 3px; background: #cfd1de; }
.on { border: 1px solid #4a9df2; box-shadow: inset 0 0 0 .5px #4a9df2; background: #f1f3f7; }
.tool.on { width: 27px; height: 27px; padding: 4px; margin: 0; }
.tool.on svg, .split > svg:first-child { width: 17px; height: 18px; }
.tool.wide { margin: 0 5px 0 5px; }
.split { display: flex; align-items: center; justify-content: space-between; width: 41px; height: 27px; padding: 0 2px 0 4px; margin-right: 0; }
.dd { width: 8px; height: 5px; color: #7a7a80; }
.select { margin-left: 4px; }
.menu { display: flex; align-items: center; }
.menu > svg:first-child { width: 18px; height: 18px; margin-right: 4px; }
.menu .dd { margin-left: 2px; }
.mode { margin: 0 10px 0 10px; }
.clipboard { margin-left: 5px; margin-right: 15px; }
.extend { margin-left: 5px; }
.empty { margin-right: 4px; }
.by { margin-left: 15px; }
.overflow { width: 9px; height: 5px; margin: 13px 0 0 13px; color: #222; }

/* 3D view */
.view { display: block; width: 1574px; height: 812px; background: linear-gradient(#6b8bde, #fff); }
.info { font: 14px "Noto Sans", sans-serif; fill: #0c0c14; }
.info .bold { font-weight: 700; fill: #000; }
.ansys { font: 800 36px "Open Sans", sans-serif; }
.release { font: 18.500px "Open Sans", sans-serif; }
.release.strong { font-weight: 700; }
.axis { font: 14px "Open Sans", sans-serif; }

/* bottom docks */
.dock { flex: none; height: 35px; display: flex; padding-top: 5px; overflow: hidden; }
.dock .bar { height: 25px; }
.graph { width: 801px; }
.graph .bar { padding-right: 11px; }
.tabular { flex: 1; margin-left: 4px; }
.tabular .bar { padding-right: 7px; }
.graph-tools { display: flex; padding: 2px 0 0 162px; }
.gbtn { width: 27px; height: 27px; margin-right: 36px; border: 1.500px solid #4a9df2; }
.gcombo { width: 125px; height: 27px; background: #fff; border: 1px solid #cdd0de; }
.sheet { display: flex; height: 24px; padding-left: 2px; padding-right: 19px; font-size: 13.500px; }
.th { display: flex; align-items: flex-start; width: 118px; height: 24px; padding: 1px 0 0 4px; border-right: 2px solid #777; background: #f1f1f3; overflow: hidden; }
.corner { width: 18px; }
.time { width: 57px; padding-left: 2px; }
.avg { width: 110px; }
.th span { line-height: 18px; margin-top: -1px; }
.tick { flex: none; width: 17px; height: 17px; margin: 1px 6px 0 0; border: 2px solid #777; background: #fff; }
.red { color: #d8202c; }
.green { color: #1a8f28; }
.blue { color: #2a22c8; }
.void { flex: 1; background: #a0a0a0; }
```
FILE: fit.js
```js
// Spreads each label over its design width by adjusting the letter spacing.
document.querySelectorAll('[data-w]').forEach(function (el) {
  var natural = el.getBoundingClientRect().width;
  var width = Number(el.dataset.w);
  el.style.letterSpacing = (width - natural) / el.textContent.length + 'px';
});
```
